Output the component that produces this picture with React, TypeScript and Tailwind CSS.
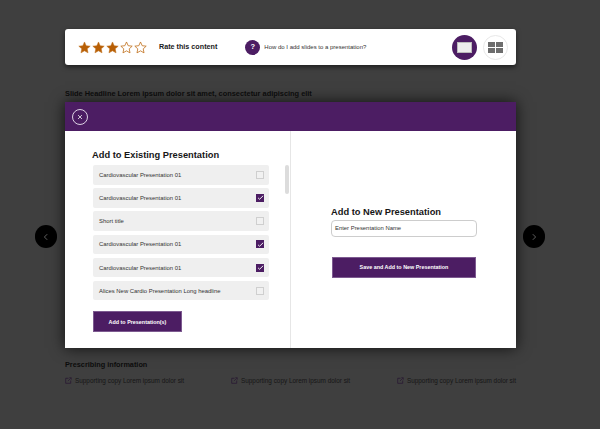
import React from 'react'

const font = { fontFamily: '"Liberation Sans", Arial, sans-serif' }

function Star({ filled }: { filled: boolean }) {
  return (
    <svg viewBox="0 0 24 24" className="w-[13px] h-[13px] mr-[1px]">
      <path
        d="M12 1.8l3.1 6.9 7.4.8-5.5 5 1.5 7.4L12 18.2l-6.5 3.7L7 14.5l-5.5-5 7.4-.8z"
        fill={filled ? '#b85f05' : 'none'}
        stroke="#c0701c"
        strokeWidth={filled ? 1 : 1.5}
      />
    </svg>
  )
}

function PresentationRow({ title, checked }: { title: string; checked: boolean }) {
  return (
    <div className="flex items-center justify-between h-[19.5px] bg-[#efefef] rounded-[2px] pl-[6px] pr-[5px]">
      <span className="pt-[1px] text-[5.9px] text-[#333]">{title}</span>
      {checked ? (
        <span className="flex items-center justify-center w-[8px] h-[8px] bg-[#4c1d63]">
          <svg viewBox="0 0 10 10" className="w-[7px] h-[7px]">
            <path d="M1.5 5.5l2.2 2L8.8 2.5" fill="none" stroke="#fff" strokeWidth="1.3" />
          </svg>
        </span>
      ) : (
        <span className="w-[8px] h-[8px] border border-[#cfcfcf] bg-[#f1f1f1]" />
      )}
    </div>
  )
}

function SupportingLink() {
  return (
    <div className="flex items-center gap-[3px]">
      <svg viewBox="0 0 12 12" className="w-[7px] h-[7px]">
        <path d="M6 2.2H1.2v8.6h8.6V6" fill="none" stroke="#2a1a33" strokeWidth="1.4" />
        <path d="M5 7l5-5M7.4 1.2h3.4v3.4" fill="none" stroke="#2a1a33" strokeWidth="1.3" />
      </svg>
      <span className="text-[6.4px] text-[#161616]">Supporting copy Lorem ipsum dolor sit</span>
    </div>
  )
}

const rows = [
  { title: 'Cardiovascular Presentation 01', checked: false },
  { title: 'Cardiovascular Presentation 01', checked: true },
  { title: 'Short title', checked: false },
  { title: 'Cardiovascular Presentation 01', checked: true },
  { title: 'Cardiovascular Presentation 01', checked: true },
  { title: 'Alices New Cardio Presentation Long headline', checked: false },
]

export default function App() {
  return (
    <div style={font} className="relative w-[600px] h-[429px] overflow-hidden bg-[#3f3f3f] pt-[29px] pl-[65px]">
      <div className="w-[451px]">
        {/* Rating bar */}
        <div className="flex items-center h-[36px] bg-white rounded-[3px] shadow-[0_2px_5px_rgba(0,0,0,0.55)] pl-[13px] pr-[8px]">
          <div className="flex">
            {[0, 1, 2, 3, 4].map((i) => (
              <Star key={i} filled={i < 3} />
            ))}
          </div>
          <span className="ml-[11px] pt-[1px] text-[7.2px] font-bold text-[#1a1a1a]">Rate this content</span>
          <span className="ml-[28px] flex items-center justify-center w-[15px] h-[15px] rounded-full bg-[#4c1d63] text-white text-[7.5px] font-bold">?</span>
          <span className="ml-[4px] pt-[1px] text-[6px] text-[#333]">How do I add slides to a presentation?</span>
          <div className="ml-auto flex gap-[6px]">
            <span className="flex items-center justify-center w-[25px] h-[25px] rounded-full bg-[#4c1d63]">
              <span className="w-[15px] h-[11px] bg-[#ececec] border border-[#bbb]" />
            </span>
            <span className="flex items-center justify-center w-[25px] h-[25px] rounded-full border border-[#e8e8e8] bg-white">
              <span className="grid grid-cols-2 gap-[1px] w-[15px] h-[11px]">
                <span className="bg-[#6d6d6d]" />
                <span className="bg-[#6d6d6d]" />
                <span className="bg-[#6d6d6d]" />
                <span className="bg-[#6d6d6d]" />
              </span>
            </span>
          </div>
        </div>

        <h2 className="mt-[24px] h-[13px] text-[7.4px] leading-[10px] font-bold text-[#0c0c0c] whitespace-nowrap">
          Slide Headline Lorem ipsum dolor sit amet, consectetur adipiscing elit
        </h2>

        {/* Modal */}
        <div className="h-[246px] bg-white shadow-[0_0_14px_rgba(0,0,0,0.75)]">
          <div className="flex items-center h-[29px] bg-[#4c1d63] pl-[7px]">
            <span className="flex items-center justify-center w-[16px] h-[16px] rounded-full border border-[#ddd3e3]">
              <svg viewBox="0 0 10 10" className="w-[8px] h-[8px]">
                <path d="M2.5 2.5l5 5M7.5 2.5l-5 5" stroke="#eee" strokeWidth="1" fill="none" />
              </svg>
            </span>
          </div>
          <div className="flex h-[217px]">
            <div className="relative w-[226px] border-r border-[#e6e6e6] pl-[28px] pt-[18px]">
              <h3 className="ml-[-1px] text-[9.3px] leading-[12px] font-bold text-[#161616] whitespace-nowrap">
                Add to Existing Presentation
              </h3>
              <div className="mt-[4px] flex flex-col gap-[3.7px] w-[176px]">
                {rows.map((row, i) => (
                  <PresentationRow key={i} title={row.title} checked={row.checked} />
                ))}
              </div>
              <button className="mt-[11px] w-[89px] h-[21px] bg-[#4c1d63] border border-[#7d5a90] text-white text-[5.4px] font-bold">
                Add to Presentation(s)
              </button>
              {/* scrollbar */}
              <span className="absolute left-[220px] top-[34px] w-[4px] h-[29px] rounded-[2px] bg-[#dcdcdc]" />
            </div>
            <div className="flex-1 pl-[40px] pt-[75px]">
              <h3 className="text-[9.3px] leading-[12px] font-bold text-[#161616] whitespace-nowrap">
                Add to New Presentation
              </h3>
              <div className="mt-[2px] flex items-center w-[146px] h-[17px] rounded-[4px] border border-[#cdcdcd] pl-[3px] text-[5.9px] text-[#333]">
                Enter Presentation Name
              </div>
              <button className="mt-[20px] ml-[1px] w-[144px] h-[21px] bg-[#4c1d63] border border-[#7d5a90] text-white text-[5.4px] font-bold">
                Save and Add to New Presentation
              </button>
            </div>
          </div>
        </div>

        {/* Footer links */}
        <h4 className="mt-[12px] text-[7.3px] leading-[10px] font-bold text-[#0c0c0c]">Prescribing information</h4>
        <div className="mt-[6px] flex justify-between">
          <SupportingLink />
          <SupportingLink />
          <SupportingLink />
        </div>
      </div>

      {/* Carousel arrows */}
      <span className="absolute left-[35px] top-[225px] flex items-center justify-center w-[22px] h-[23px] rounded-full bg-black">
        <svg viewBox="0 0 10 10" className="w-[8px] h-[8px]">
          <path d="M6.5 1.5L3 5l3.5 3.5" fill="none" stroke="#777" strokeWidth="1" />
        </svg>
      </span>
      <span className="absolute left-[523px] top-[225px] flex items-center justify-center w-[22px] h-[23px] rounded-full bg-black">
        <svg viewBox="0 0 10 10" className="w-[8px] h-[8px]">
          <path d="M3.5 1.5L7 5 3.5 8.5" fill="none" stroke="#777" strokeWidth="1" />
        </svg>
      </span>
    </div>
  )
}
